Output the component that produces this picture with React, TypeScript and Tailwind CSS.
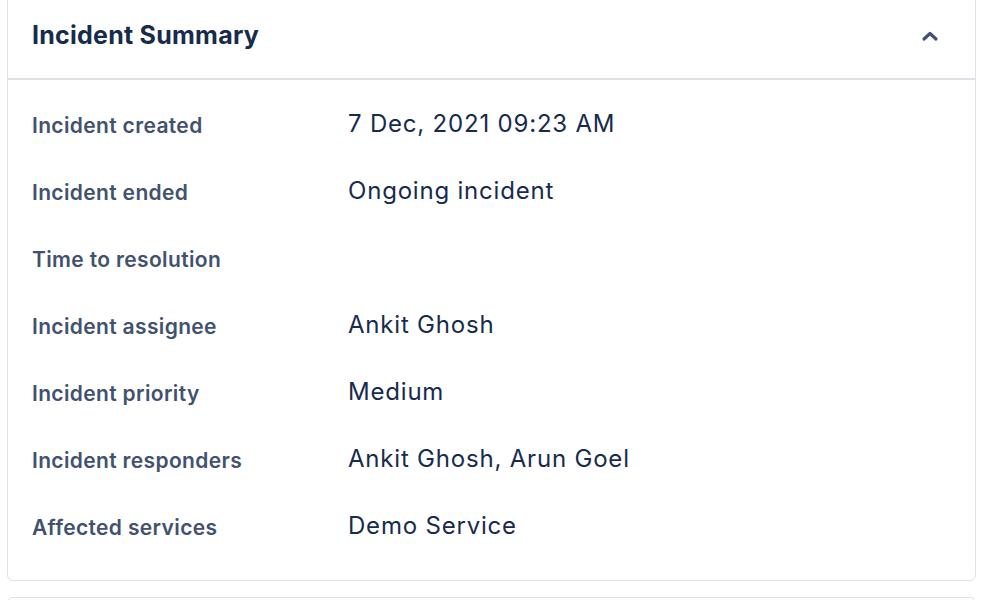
const rows: [string, string][] = [
  ["Incident created", "7 Dec, 2021 09:23 AM"],
  ["Incident ended", "Ongoing incident"],
  ["Time to resolution", ""],
  ["Incident assignee", "Ankit Ghosh"],
  ["Incident priority", "Medium"],
  ["Incident responders", "Ankit Ghosh, Arun Goel"],
  ["Affected services", "Demo Service"],
];

export default function App() {
  return (
    <div
      className="w-[999px] h-[600px] overflow-hidden bg-white"
      style={{ fontFamily: "Inter, 'Noto Sans', sans-serif" }}
    >
      <div className="ml-[7px] mt-[-8px] w-[969px] rounded-md border border-[#dfe1e6] bg-white">
        <div className="flex h-[87px] items-center justify-between border-b-2 border-[#dfe1e6] pl-[24px] pr-[36px]">
          <h2 className="text-[25px] font-bold tracking-[0.25px] text-[#172b4d]">Incident Summary</h2>
          <svg width="18" height="12" viewBox="0 0 18 12" fill="none">
            <path d="M3 9 L9 3.5 L15 9" stroke="#42526e" strokeWidth="3.2" strokeLinecap="round" strokeLinejoin="round" />
          </svg>
        </div>
        <div className="pt-[11px] pb-[20px] pl-[24px]">
          {rows.map(([label, value]) => (
            <div key={label} className="flex h-[67px] items-center">
              <div className="w-[316px] pt-[3px] text-[21px] font-semibold tracking-[0.35px] text-[#42526e]">{label}</div>
              <div className="pb-[2px] text-[24px] tracking-[0.8px] text-[#172b4d]">{value}</div>
            </div>
          ))}
        </div>
      </div>
      <div className="ml-[7px] mt-[16px] h-[40px] w-[969px] rounded-md border border-[#dfe1e6]" />
    </div>
  );
}
